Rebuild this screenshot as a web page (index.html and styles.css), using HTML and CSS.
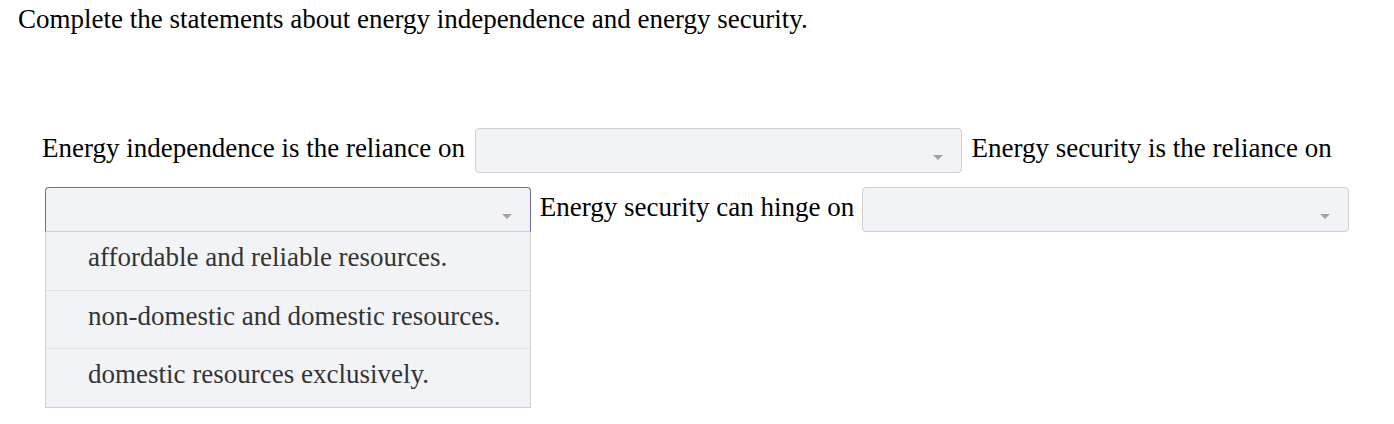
FILE: index.html
```html
<!DOCTYPE html>
<html lang="en">
<head>
<meta charset="UTF-8">
<title>Energy independence</title>
<link rel="stylesheet" href="styles.css">
</head>
<body>
<p class="prompt">Complete the statements about energy independence and energy security.</p>

<div class="statements">
  Energy independence is the reliance on
  <span class="select">
    <svg class="arrow" width="10" height="6" viewBox="0 0 10 6"><path d="M0 0H10L5 5Z"/></svg>
  </span>
  Energy security is the reliance on
  <span class="select open">
    <svg class="arrow" width="10" height="6" viewBox="0 0 10 6"><path d="M0 0H10L5 5Z"/></svg>
    <span class="menu">
      <span class="option">affordable and reliable resources.</span>
      <span class="option">non-domestic and domestic resources.</span>
      <span class="option">domestic resources exclusively.</span>
    </span>
  </span>
  Energy security can hinge on
  <span class="select last">
    <svg class="arrow" width="10" height="6" viewBox="0 0 10 6"><path d="M0 0H10L5 5Z"/></svg>
  </span>
</div>
</body>
</html>
```

FILE: styles.css
```css
html, body {
  min-height: 424px;
}
body {
  margin: 0;
  font-family: "Liberation Serif", "Times New Roman", serif;
  font-size: 27px;
  color: #000;
  background: #fff;
}
.prompt {
  margin: 0;
  padding: 4px 0 0 18px;
}
.statements {
  padding: 86px 0 0 42px;
  width: 1330px;
}
.select {
  position: relative;
  display: inline-block;
  vertical-align: middle;
  box-sizing: border-box;
  width: 487px;
  height: 45px;
  margin: 7px 3px;
  background-color: #f2f3f7;
  border: 1px solid #cfcfd4;
  border-radius: 4px;
}
.select .arrow {
  position: absolute;
  right: 18px;
  top: 26px;
  fill: #a3a3a6;
}
.select.open {
  width: 486px;
  margin-right: 2px;
  border-color: #6e6b9e;
  border-bottom-color: #cfcfd4;
  border-radius: 4px 4px 0 0;
}
.select.last {
  margin-left: 1px;
}
.menu {
  position: absolute;
  left: -1px;
  top: 44px;
  width: 484px;
  background-color: #f2f3f7;
  border: 1px solid #cfcfd4;
  border-top: none;
  z-index: 2;
}
.option {
  display: block;
  height: 58px;
  line-height: 50px;
  padding-left: 42px;
  color: #333;
  border-top: 1px solid #e1e2e7;
  box-sizing: border-box;
}
.option:first-child {
  border-top: none;
}
.option:last-child {
  height: 59px;
}
```
